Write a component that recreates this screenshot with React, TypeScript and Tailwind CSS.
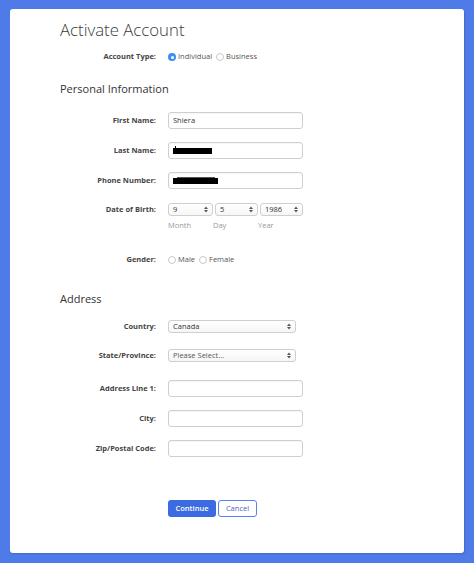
import React from "react";

const F = { fontFamily: "'Open Sans', 'Liberation Sans', sans-serif" };

function Label({ children }: { children: React.ReactNode }) {
  return (
    <div className="w-[96px] shrink-0 text-right text-[7.5px] font-bold text-[#444] leading-none pr-0">
      {children}
    </div>
  );
}

function Radio({ checked, label }: { checked?: boolean; label: string }) {
  return (
    <div className="flex items-center gap-[2px]">
      {checked ? (
        <span className="flex h-[8px] w-[8px] items-center justify-center rounded-full bg-[#3b8ef3]">
          <span className="h-[3px] w-[3px] rounded-full bg-white" />
        </span>
      ) : (
        <span className="h-[8px] w-[8px] rounded-full border border-[#c8c8c8] bg-white" />
      )}
      <span className="text-[7.5px] text-[#555] leading-none">{label}</span>
    </div>
  );
}

function Arrows() {
  return (
    <svg width="4" height="7" viewBox="0 0 4 7" className="shrink-0">
      <path d="M0 3 L2 0.5 L4 3 Z" fill="#555" />
      <path d="M0 4 L2 6.5 L4 4 Z" fill="#555" />
    </svg>
  );
}

function Select({ value, w, muted }: { value: string; w: string; muted?: boolean }) {
  return (
    <div
      className={`flex h-full items-center justify-between rounded-[3px] border border-[#cfcfcf] bg-gradient-to-b from-white to-[#f6f6f6] pl-[4px] pr-[4px] ${w}`}
    >
      <span className={`text-[7.5px] leading-none ${muted ? "text-[#555]" : "text-[#333]"}`}>{value}</span>
      <Arrows />
    </div>
  );
}

function Input({ children }: { children?: React.ReactNode }) {
  return (
    <div className="flex h-[17px] w-[135px] items-center rounded-[3px] border border-[#cfcfcf] bg-white pl-[4px] shadow-[inset_0_1px_1px_rgba(0,0,0,0.04)]">
      {children}
    </div>
  );
}

function Row({ label, children, className }: { label: string; children: React.ReactNode; className: string }) {
  return (
    <div className={`flex items-center gap-[12px] ${className}`}>
      <Label>{label}</Label>
      {children}
    </div>
  );
}

export default function App() {
  return (
    <div style={F} className="h-[563px] w-[474px] bg-[#4f7be9] pt-[9px] pl-[10px] pr-[10px] pb-[10px]">
      <div className="h-[544px] w-full rounded-[3px] bg-white pt-[9px] pl-[50px] shadow-[1px_1px_2px_rgba(0,0,0,0.15)]">
        <div className="h-[23px] text-[16.8px] font-light leading-[23px] text-[#3a3a3a]">Activate Account</div>

        <Row label="Account Type:" className="mt-[8px] h-[16px]">
          <div className="flex items-center gap-[4px]">
            <Radio checked label="Individual" />
            <Radio label="Business" />
          </div>
        </Row>

        <div className="mt-[16px] h-[16px] text-[11px] leading-[16px] text-[#333]">Personal Information</div>

        <Row label="First Name:" className="mt-[15px] h-[17px]">
          <Input>
            <span className="text-[7.5px] leading-none text-[#333]">Shiera</span>
          </Input>
        </Row>

        <Row label="Last Name:" className="mt-[13px] h-[17px]">
          <Input>
            <span className="relative block h-[6px] w-[39px] bg-black">
              <span className="absolute left-[2px] top-[-2px] h-[2px] w-[1px] bg-black" />
            </span>
          </Input>
        </Row>

        <Row label="Phone Number:" className="mt-[13px] h-[17px]">
          <Input>
            <span className="relative block h-[6px] w-[45px] bg-black">
              <span className="absolute left-[4px] top-[-1px] h-[1px] w-[38px] bg-[#555]" />
            </span>
          </Input>
        </Row>

        <Row label="Date of Birth:" className="mt-[14px] h-[13px]">
          <div className="flex h-full items-center gap-[2px]">
            <Select value="9" w="w-[45px]" />
            <Select value="5" w="w-[43px]" />
            <Select value="1986" w="w-[43px]" />
          </div>
        </Row>

        <div className="mt-[5px] flex h-[10px] items-center pl-[108px] text-[7.5px] leading-none text-[#999]">
          <span className="w-[45px]">Month</span>
          <span className="w-[45px]">Day</span>
          <span>Year</span>
        </div>

        <Row label="Gender:" className="mt-[21px] h-[16px]">
          <div className="flex items-center gap-[4px]">
            <Radio label="Male" />
            <Radio label="Female" />
          </div>
        </Row>

        <div className="mt-[23px] h-[16px] text-[11px] leading-[16px] text-[#333]">Address</div>

        <Row label="Country:" className="mt-[13px] h-[13px]">
          <Select value="Canada" w="w-[128px]" />
        </Row>

        <Row label="State/Province:" className="mt-[16px] h-[13px]">
          <Select value="Please Select..." w="w-[128px]" muted />
        </Row>

        <Row label="Address Line 1:" className="mt-[18px] h-[17px]">
          <Input />
        </Row>

        <Row label="City:" className="mt-[13px] h-[17px]">
          <Input />
        </Row>

        <Row label="Zip/Postal Code:" className="mt-[13px] h-[17px]">
          <Input />
        </Row>

        <div className="mt-[43px] flex h-[17px] gap-[2px] pl-[108px]">
          <button className="flex h-[17px] w-[48px] items-center justify-center rounded-[3px] bg-[#3a6be0] text-[7.5px] font-semibold leading-none text-white">
            Continue
          </button>
          <button className="flex h-[17px] w-[39px] items-center justify-center rounded-[3px] border-[1.5px] border-[#5a83ea] bg-white text-[7.5px] leading-none text-[#4a68bf]">
            Cancel
          </button>
        </div>
      </div>
    </div>
  );
}
